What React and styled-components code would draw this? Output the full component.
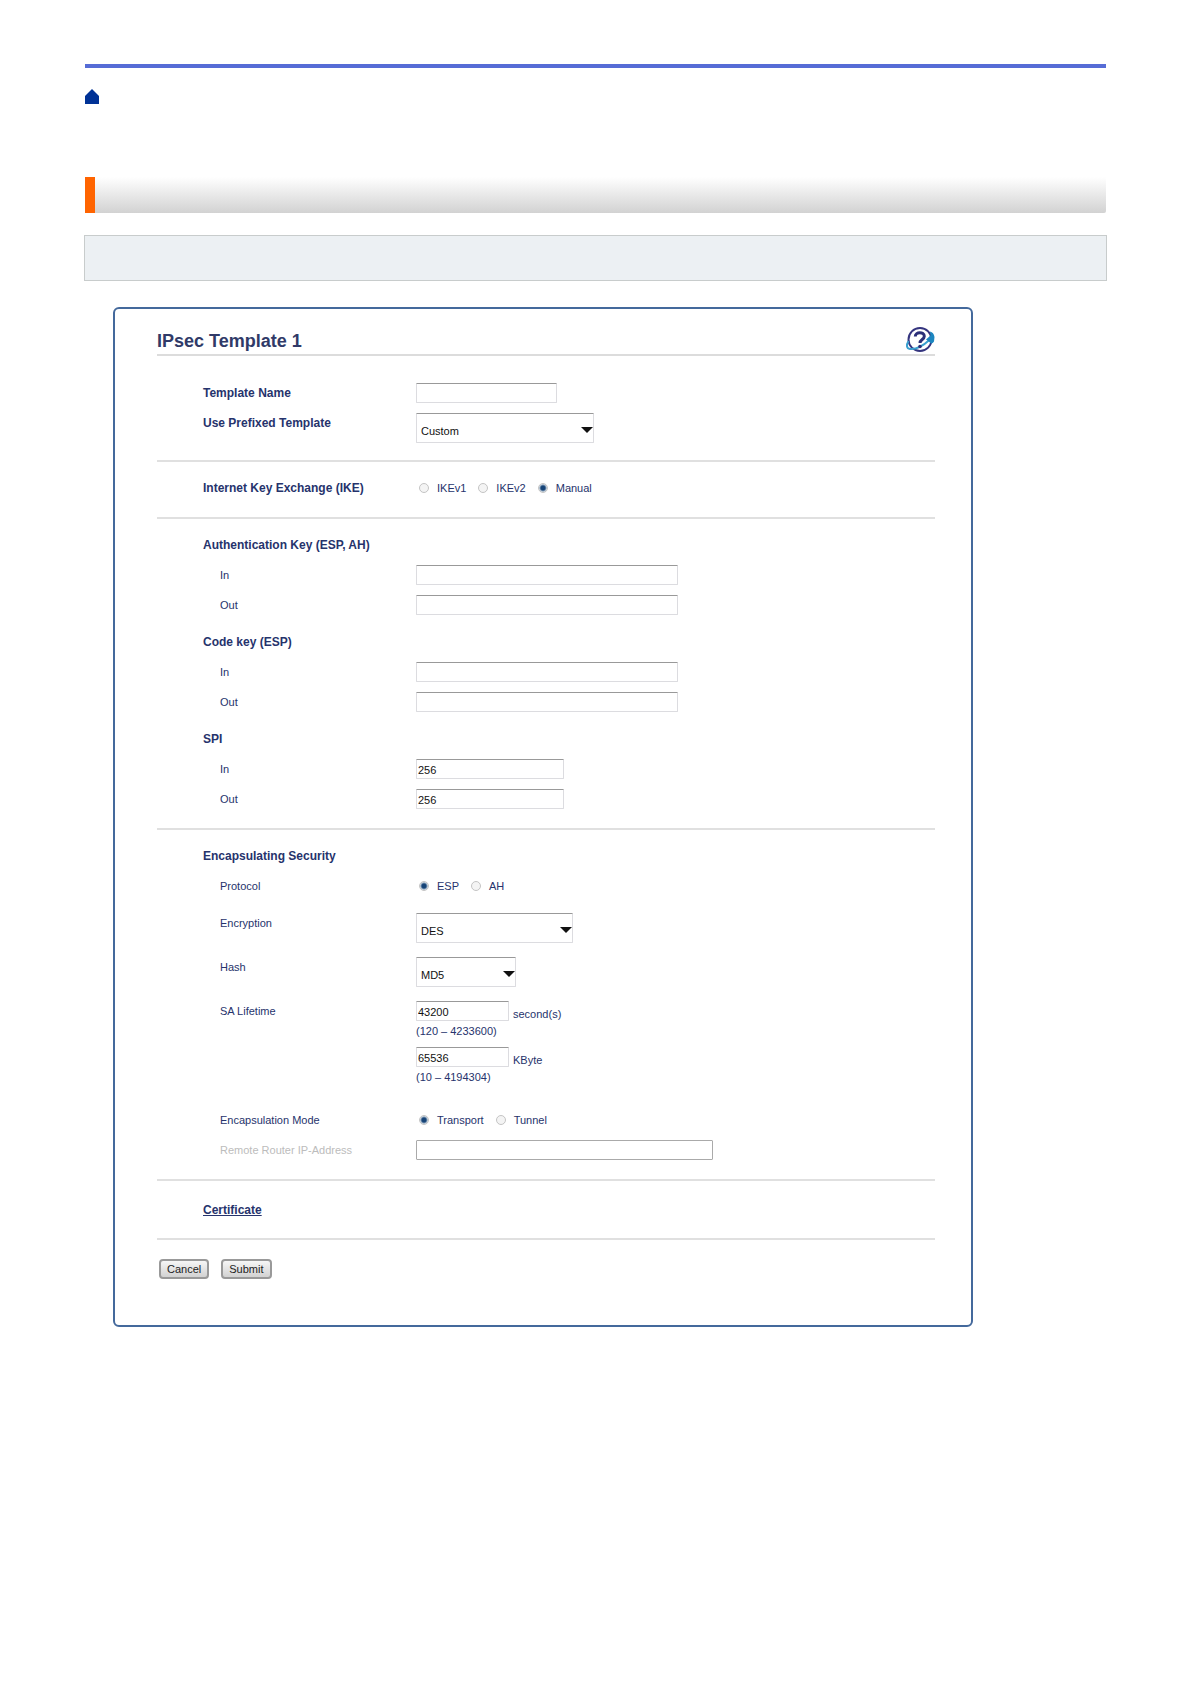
import React, { useState } from 'react';
import styled, { createGlobalStyle } from 'styled-components';

const App = () => {
  const [formData, setFormData] = useState({
    templateName: '',
    prefixed: 'Custom',
    ike: 'Manual',
    authIn: '',
    authOut: '',
    codeIn: '',
    codeOut: '',
    spiIn: '256',
    spiOut: '256',
    protocol: 'ESP',
    encryption: 'DES',
    hash: 'MD5',
    seconds: '43200',
    kbytes: '65536',
    mode: 'Transport',
    remoteRouter: '',
  });

  const handleChange = (e) => {
    const { name, value } = e.target;
    setFormData((prevData) => ({ ...prevData, [name]: value }));
  };

  const handleSubmit = (e) => {
    e.preventDefault();
  };

  const textRow = (name, label, width, bold) => (
    <Row>
      <Label htmlFor={name} $bold={bold}>
        {label}
      </Label>
      <Input
        id={name}
        name={name}
        $width={width}
        value={formData[name]}
        onChange={handleChange}
      />
    </Row>
  );

  const selectRow = (name, label, width, height, options, bold) => (
    <Row $height={height}>
      <Label htmlFor={name} $bold={bold}>
        {label}
      </Label>
      <SelectBox $width={width}>
        <Select
          id={name}
          name={name}
          value={formData[name]}
          onChange={handleChange}
        >
          {options.map((option) => (
            <option key={option}>{option}</option>
          ))}
        </Select>
        <Arrow viewBox="0 0 12 6" aria-hidden="true">
          <path d="M0 0h12L6 6z" fill="#111" />
        </Arrow>
      </SelectBox>
    </Row>
  );

  const radioRow = (name, label, height, options, bold) => (
    <Row $height={height} role="radiogroup" aria-label={label}>
      <Label as="span" $bold={bold}>
        {label}
      </Label>
      <Radios>
        {options.map((option) => (
          <RadioLabel key={option}>
            <Radio
              name={name}
              value={option}
              checked={formData[name] === option}
              onChange={handleChange}
            />
            {option}
          </RadioLabel>
        ))}
      </Radios>
    </Row>
  );

  return (
    <Page>
      <GlobalStyle />
      <TopBar />
      <HomeLink href="#" aria-label="Home">
        <svg width="14" height="15" viewBox="0 0 14 15">
          <path d="M7 0L14 7V15H0V7z" fill="#003296" />
        </svg>
      </HomeLink>
      <Heading />
      <Note />
      <Panel onSubmit={handleSubmit}>
        <TitleBar>
          <Title>IPsec Template 1</Title>
          <HelpButton type="button" aria-label="Help">
            <HelpIcon />
          </HelpButton>
        </TitleBar>

        <Section $top={27}>
          {textRow('templateName', 'Template Name', 141, true)}
          {selectRow(
            'prefixed',
            'Use Prefixed Template',
            178,
            38,
            ['Custom'],
            true
          )}
        </Section>

        <Section>
          {radioRow(
            'ike',
            'Internet Key Exchange (IKE)',
            30,
            ['IKEv1', 'IKEv2', 'Manual'],
            true
          )}
        </Section>

        <Section>
          <Group>
            <GroupTitle>Authentication Key (ESP, AH)</GroupTitle>
            {textRow('authIn', 'In', 262)}
            {textRow('authOut', 'Out', 262)}
          </Group>
          <Group>
            <GroupTitle>Code key (ESP)</GroupTitle>
            {textRow('codeIn', 'In', 262)}
            {textRow('codeOut', 'Out', 262)}
          </Group>
          <Group>
            <GroupTitle>SPI</GroupTitle>
            {textRow('spiIn', 'In', 148)}
            {textRow('spiOut', 'Out', 148)}
          </Group>
        </Section>

        <Section>
          <GroupTitle>Encapsulating Security</GroupTitle>
          {radioRow('protocol', 'Protocol', 37, ['ESP', 'AH'])}
          {selectRow('encryption', 'Encryption', 157, 44, ['DES'])}
          {selectRow('hash', 'Hash', 100, 44, ['MD5'])}
          <Row $height={109}>
            <Label htmlFor="seconds">SA Lifetime</Label>
            <div>
              <Lifetime>
                <Input
                  id="seconds"
                  name="seconds"
                  $width={93}
                  value={formData.seconds}
                  onChange={handleChange}
                />
                <span>second(s)</span>
              </Lifetime>
              <Range>(120 – 4233600)</Range>
              <Lifetime>
                <Input
                  name="kbytes"
                  aria-label="SA Lifetime in KByte"
                  $width={93}
                  value={formData.kbytes}
                  onChange={handleChange}
                />
                <span>KByte</span>
              </Lifetime>
              <Range>(10 – 4194304)</Range>
            </div>
          </Row>
          {radioRow('mode', 'Encapsulation Mode', 30, ['Transport', 'Tunnel'])}
          <Row>
            <Label htmlFor="remoteRouter" $disabled>
              Remote Router IP-Address
            </Label>
            <DisabledInput
              id="remoteRouter"
              name="remoteRouter"
              $width={297}
              value={formData.remoteRouter}
              disabled
            />
          </Row>
        </Section>

        <Section $top={19}>
          <LinkRow>
            <CertificateLink href="#">Certificate</CertificateLink>
          </LinkRow>
        </Section>

        <Buttons>
          <Button type="button">Cancel</Button>
          <Button type="submit">Submit</Button>
        </Buttons>
      </Panel>
    </Page>
  );
};

const HelpIcon = () => (
  <svg width="30" height="28" viewBox="0 0 30 28" aria-hidden="true">
    <circle
      cx="15"
      cy="12.5"
      r="11.5"
      fill="#fff"
      stroke="#35357f"
      strokeWidth="2"
    />
    <path
      d="M3.500 14C1 18 1.500 21.500 5 22C11 22.500 19 18 25 12.500"
      fill="none"
      stroke="#3aa0d0"
      strokeWidth="2"
    />
    <path
      d="M21 12.500L25.500 8.500L25 4.500C27.500 5 29 7 29.500 10L29 14.500C27.500 17 25.500 17 24.500 15z"
      fill="#1c86c0"
    />
    <path
      d="M10.300 9.500C10.300 4.500 19.300 4.500 19.300 9.200C19.300 12.500 15 12.500 15 16"
      fill="none"
      stroke="#2b2f78"
      strokeWidth="3"
    />
    <circle cx="15" cy="19.500" r="1.800" fill="#2b2f78" />
  </svg>
);

const GlobalStyle = createGlobalStyle`
  * {
    box-sizing: border-box;
  }

  body {
    margin: 0;
    background: #fff;
    color: #26336c;
    font-family: 'Liberation Sans', Arial, sans-serif;
    font-size: 11px;
    line-height: 20px;
  }
`;

const Page = styled.main`
  padding: 64px 84px;
`;

const TopBar = styled.div`
  height: 4px;
  margin: 0 1px;
  background: #566cd6;
`;

const HomeLink = styled.a`
  display: block;
  width: 14px;
  height: 15px;
  margin: 21px 1px 73px;

  svg {
    display: block;
  }
`;

const Heading = styled.div`
  height: 36px;
  margin: 0 1px 22px;
  border-left: 10px solid #ff6400;
  border-bottom-right-radius: 2px;
  background: linear-gradient(to bottom, #fff, #d2d2d2);
`;

const Note = styled.div`
  height: 46px;
  border: 1px solid #c8cccc;
  background: #ecf0f3;
`;

const Panel = styled.form`
  max-width: 860px;
  margin: 26px 0 0 29px;
  padding: 18px 36px 46px 42px;
  border: 2px solid #44699c;
  border-radius: 6px;
`;

const TitleBar = styled.div`
  display: flex;
  align-items: flex-start;
  justify-content: space-between;
  height: 29px;
  border-bottom: 2px solid #dcdcdc;
`;

const Title = styled.h1`
  margin: 2px 0 0;
  font-size: 18px;
  line-height: 24px;
  color: #303a68;
`;

const HelpButton = styled.button`
  padding: 0;
  border: none;
  background: none;
  cursor: pointer;

  svg {
    display: block;
  }
`;

const Section = styled.section`
  padding: ${(props) => props.$top || 16}px 0 9px 46px;
  border-bottom: 2px solid #e0e0e0;
`;

const Group = styled.div`
  & + & {
    margin-top: 7px;
  }
`;

const GroupTitle = styled.h2`
  height: 30px;
  margin: 0;
  font-size: 12px;
  line-height: 20px;
`;

const Row = styled.div`
  display: grid;
  grid-template-columns: 213px 1fr;
  align-items: start;
  min-height: ${(props) => props.$height || 30}px;
`;

const Label = styled.label`
  padding-left: ${(props) => (props.$bold ? 0 : 17)}px;
  font-size: ${(props) => (props.$bold ? 12 : 11)}px;
  font-weight: ${(props) => (props.$bold ? 'bold' : 'normal')};
  color: ${(props) => (props.$disabled ? '#bcbcbc' : 'inherit')};
`;

const Input = styled.input`
  width: ${(props) => props.$width}px;
  height: 20px;
  padding: 2px 1px 0;
  border: 1px solid #dcdce0;
  border-top-color: #999;
  border-radius: 1px;
  background: #fff;
  color: #111;
  font: inherit;
`;

const DisabledInput = styled(Input)`
  border: 1px solid #aaa;
`;

const SelectBox = styled.div`
  position: relative;
  width: ${(props) => props.$width}px;
`;

const Select = styled.select`
  width: 100%;
  height: 30px;
  padding: 6px 16px 0 4px;
  border: 1px solid #dcdce0;
  border-top-color: #999;
  border-radius: 1px;
  background: #fff;
  color: #111;
  font: inherit;
  appearance: none;
`;

const Arrow = styled.svg`
  position: absolute;
  top: 14px;
  right: 1px;
  width: 12px;
  height: 6px;
  pointer-events: none;
`;

const Radios = styled.div`
  display: flex;
  gap: 12px;
  padding-left: 3px;
`;

const RadioLabel = styled.label`
  display: flex;
  align-items: center;
  gap: 8px;
`;

const Radio = styled.input.attrs({ type: 'radio' })`
  width: 10px;
  height: 10px;
  margin: 0;
  border: 1px solid #c4c4c4;
  border-radius: 50%;
  background: #f4f4f4;
  appearance: none;

  &:checked {
    background: radial-gradient(circle, #164478 0 2px, #dfe6ec 4px);
  }
`;

const Lifetime = styled.div`
  display: flex;
  gap: 4px;

  span {
    padding-top: 3px;
    line-height: 20px;
    height: 20px;
  }
`;

const Range = styled.div`
  height: 26px;
`;

const LinkRow = styled.div`
  height: 29px;
`;

const CertificateLink = styled.a`
  color: inherit;
  font-size: 12px;
  font-weight: bold;
`;

const Buttons = styled.div`
  display: flex;
  gap: 12px;
  padding: 19px 0 0 2px;
`;

const Button = styled.button`
  height: 20px;
  padding: 0 6px;
  border: 2px solid #999;
  border-radius: 4px;
  background: linear-gradient(to bottom, #f6f6f6, #d2d2d2);
  color: #222;
  font: inherit;
  line-height: 16px;
  cursor: pointer;
`;

export default App;
